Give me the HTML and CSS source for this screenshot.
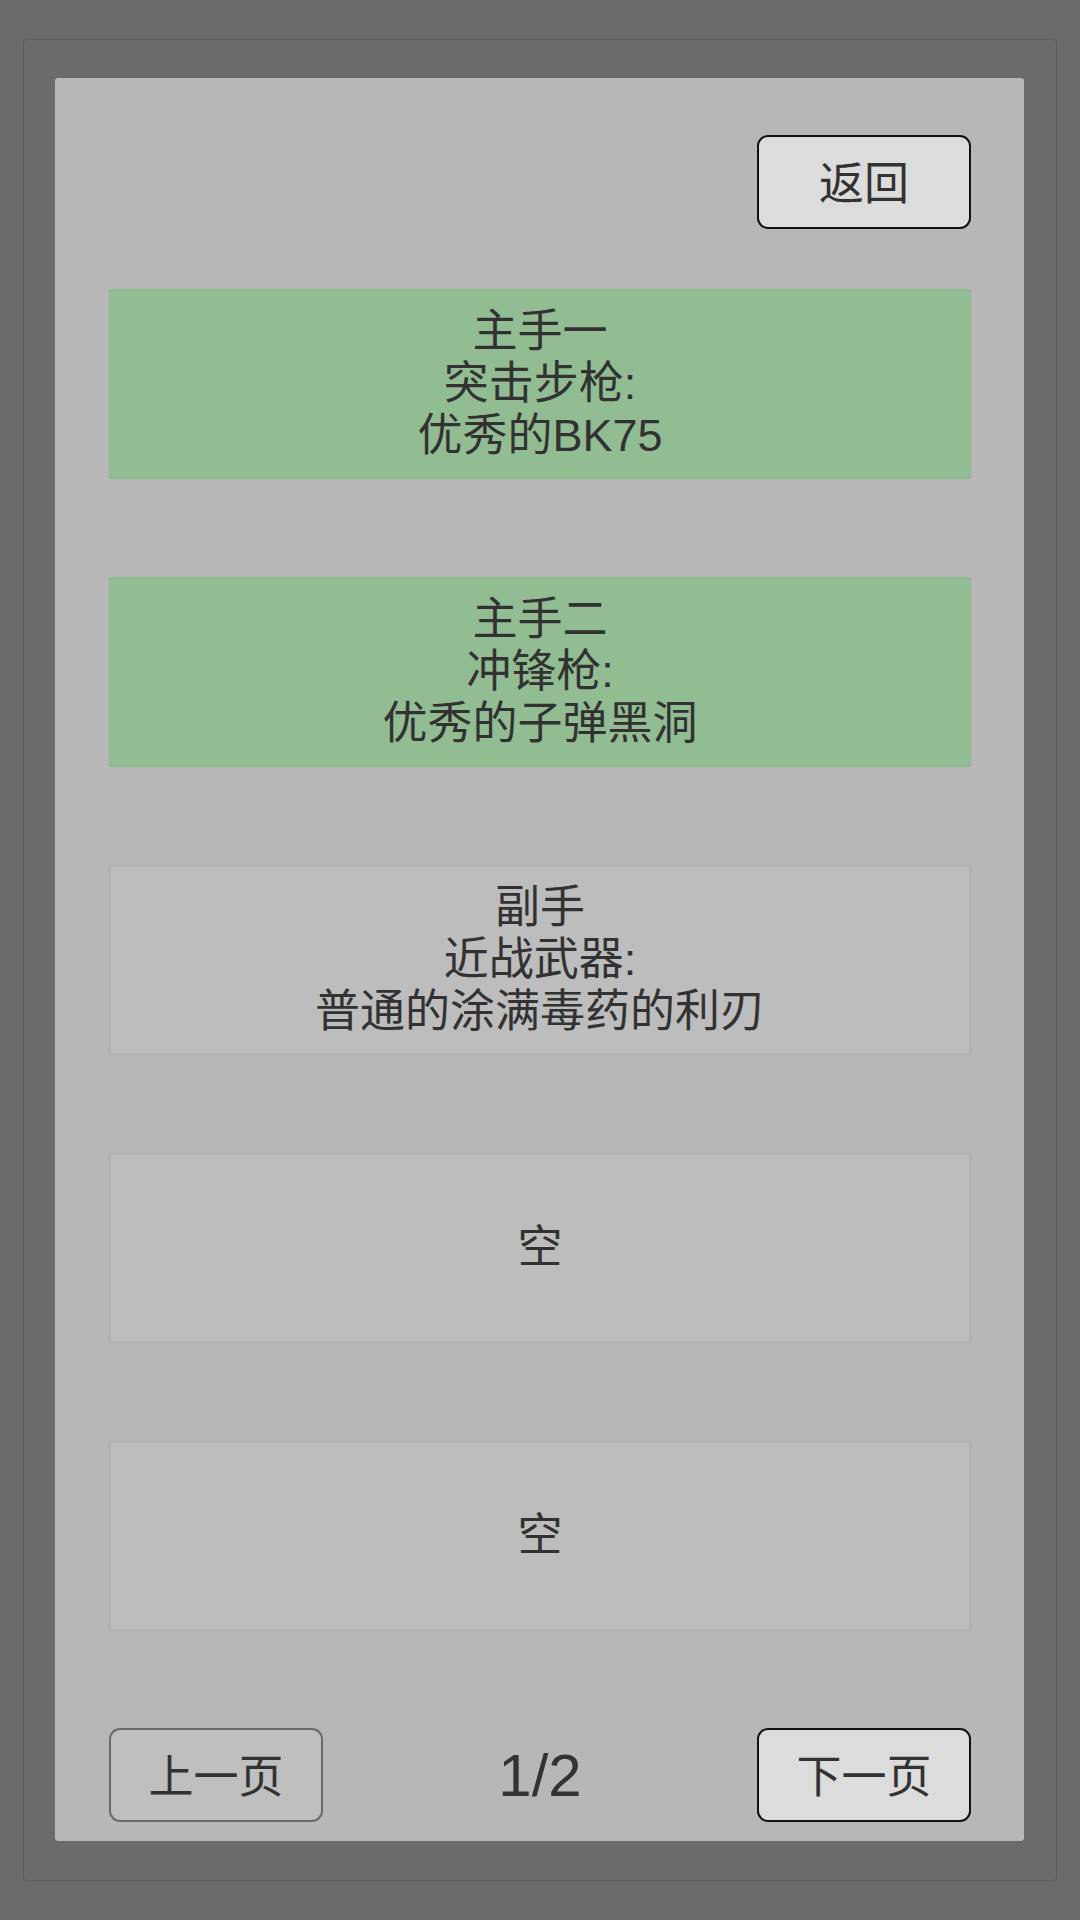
FILE: index.html
```html
<!DOCTYPE html>
<html lang="zh-CN">
<head>
<meta charset="utf-8">
<title>武器</title>
<link rel="stylesheet" href="styles.css">
</head>
<body>
<div class="frame">
  <div class="panel">
    <div class="top-bar">
      <div class="btn btn-dark">返回</div>
    </div>
    <div class="slots">
      <div class="slot slot-green"><span>主手一</span><span>突击步枪:</span><span>优秀的BK75</span></div>
      <div class="slot slot-green"><span>主手二</span><span>冲锋枪:</span><span>优秀的子弹黑洞</span></div>
      <div class="slot slot-gray"><span>副手</span><span>近战武器:</span><span>普通的涂满毒药的利刃</span></div>
      <div class="slot slot-gray"><span>空</span></div>
      <div class="slot slot-gray"><span>空</span></div>
    </div>
    <div class="bottom-bar">
      <div class="btn btn-light">上一页</div>
      <div class="page">1/2</div>
      <div class="btn btn-dark">下一页</div>
    </div>
  </div>
</div>
</body>
</html>
```

FILE: styles.css
```css
* { box-sizing: border-box; }
html, body {
  margin: 0;
  padding: 0;
  background: #6b6b6b;
  font-family: "Liberation Sans", "Noto Sans CJK SC", sans-serif;
  color: #323232;
}
body { width: 1080px; height: 1920px; overflow: hidden; }
.frame {
  margin: 39px 23px 0 23px;
  height: 1842px;
  border: 1px solid #5e5e5e;
  border-radius: 3px;
  padding: 38px 32px 39px 31px;
}
.panel {
  height: 100%;
  background: #b7b7b7;
  border-radius: 3px;
  padding: 57px 53px 17px 54px;
  display: flex;
  flex-direction: column;
}
.top-bar {
  display: flex;
  justify-content: flex-end;
}
.btn {
  width: 214px;
  height: 94px;
  border-radius: 11px;
  display: flex;
  align-items: center;
  justify-content: center;
  font-size: 45px;
  padding-bottom: 3px;
}
.btn-dark {
  background: #dcdcdc;
  border: 2px solid #111;
}
.btn-light {
  background: #bfbfbf;
  border: 2px solid #6a6a6a;
}
.slots {
  margin-top: 60px;
  display: flex;
  flex-direction: column;
  gap: 98px;
}
.slot {
  height: 190px;
  display: flex;
  flex-direction: column;
  align-items: center;
  justify-content: center;
  font-size: 45px;
  line-height: 52px;
  border-radius: 2px;
}
.slot-green {
  background: #92bd92;
  border: 1px solid #8bb68b;
}
.slot-gray {
  background: #bdbdbd;
  border: 2px solid #b2b2b2;
}
.bottom-bar {
  margin-top: 97px;
  display: flex;
  justify-content: space-between;
  align-items: center;
}
.page {
  font-size: 60px;
  color: #333;
}
```
